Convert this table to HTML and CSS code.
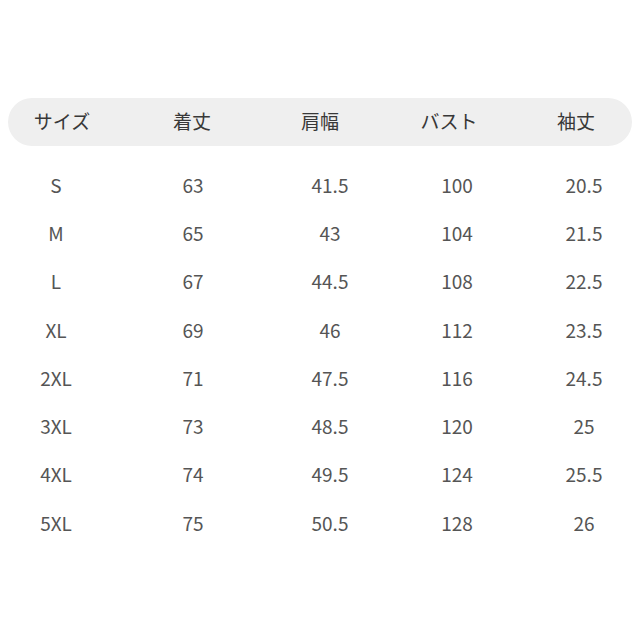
FILE: index.html
```html
<!DOCTYPE html>
<html lang="ja">
<head>
<meta charset="utf-8">
<link rel="stylesheet" href="styles.css">
</head>
<body>
<div class="chart">
  <div class="head">
    <span>サイズ</span><span>着丈</span><span>肩幅</span><span>バスト</span><span>袖丈</span>
  </div>
  <div class="rows">
    <div class="row"><span>S</span><span>63</span><span>41.5</span><span>100</span><span>20.5</span></div>
    <div class="row"><span>M</span><span>65</span><span>43</span><span>104</span><span>21.5</span></div>
    <div class="row"><span>L</span><span>67</span><span>44.5</span><span>108</span><span>22.5</span></div>
    <div class="row"><span>XL</span><span>69</span><span>46</span><span>112</span><span>23.5</span></div>
    <div class="row"><span>2XL</span><span>71</span><span>47.5</span><span>116</span><span>24.5</span></div>
    <div class="row"><span>3XL</span><span>73</span><span>48.5</span><span>120</span><span>25</span></div>
    <div class="row"><span>4XL</span><span>74</span><span>49.5</span><span>124</span><span>25.5</span></div>
    <div class="row"><span>5XL</span><span>75</span><span>50.5</span><span>128</span><span>26</span></div>
  </div>
</div>
</body>
</html>
```
FILE: styles.css
```css
html, body {
  margin: 0;
  padding: 0;
  background: #ffffff;
}
body {
  width: 640px;
  height: 640px;
  font-family: "Noto Sans CJK JP", "Noto Sans", sans-serif;
}
.chart {
  padding-top: 98px;
}
.head {
  margin: 0 8px;
  height: 48px;
  border-radius: 24px;
  background: #efefef;
  display: grid;
  grid-template-columns: 108px 152px 104px 154px 100px;
  align-items: center;
  justify-items: center;
  color: #383838;
  font-size: 19px;
  line-height: 48px;
}
.head span {
  transform: translateY(-1px);
}
.rows {
  padding-top: 14px;
  display: flex;
  flex-direction: column;
}
.row {
  height: 48.3px;
  display: grid;
  grid-template-columns: 112px 162px 112px 142px 112px;
  align-items: center;
  justify-items: center;
  color: #555555;
  font-size: 19px;
}
```
